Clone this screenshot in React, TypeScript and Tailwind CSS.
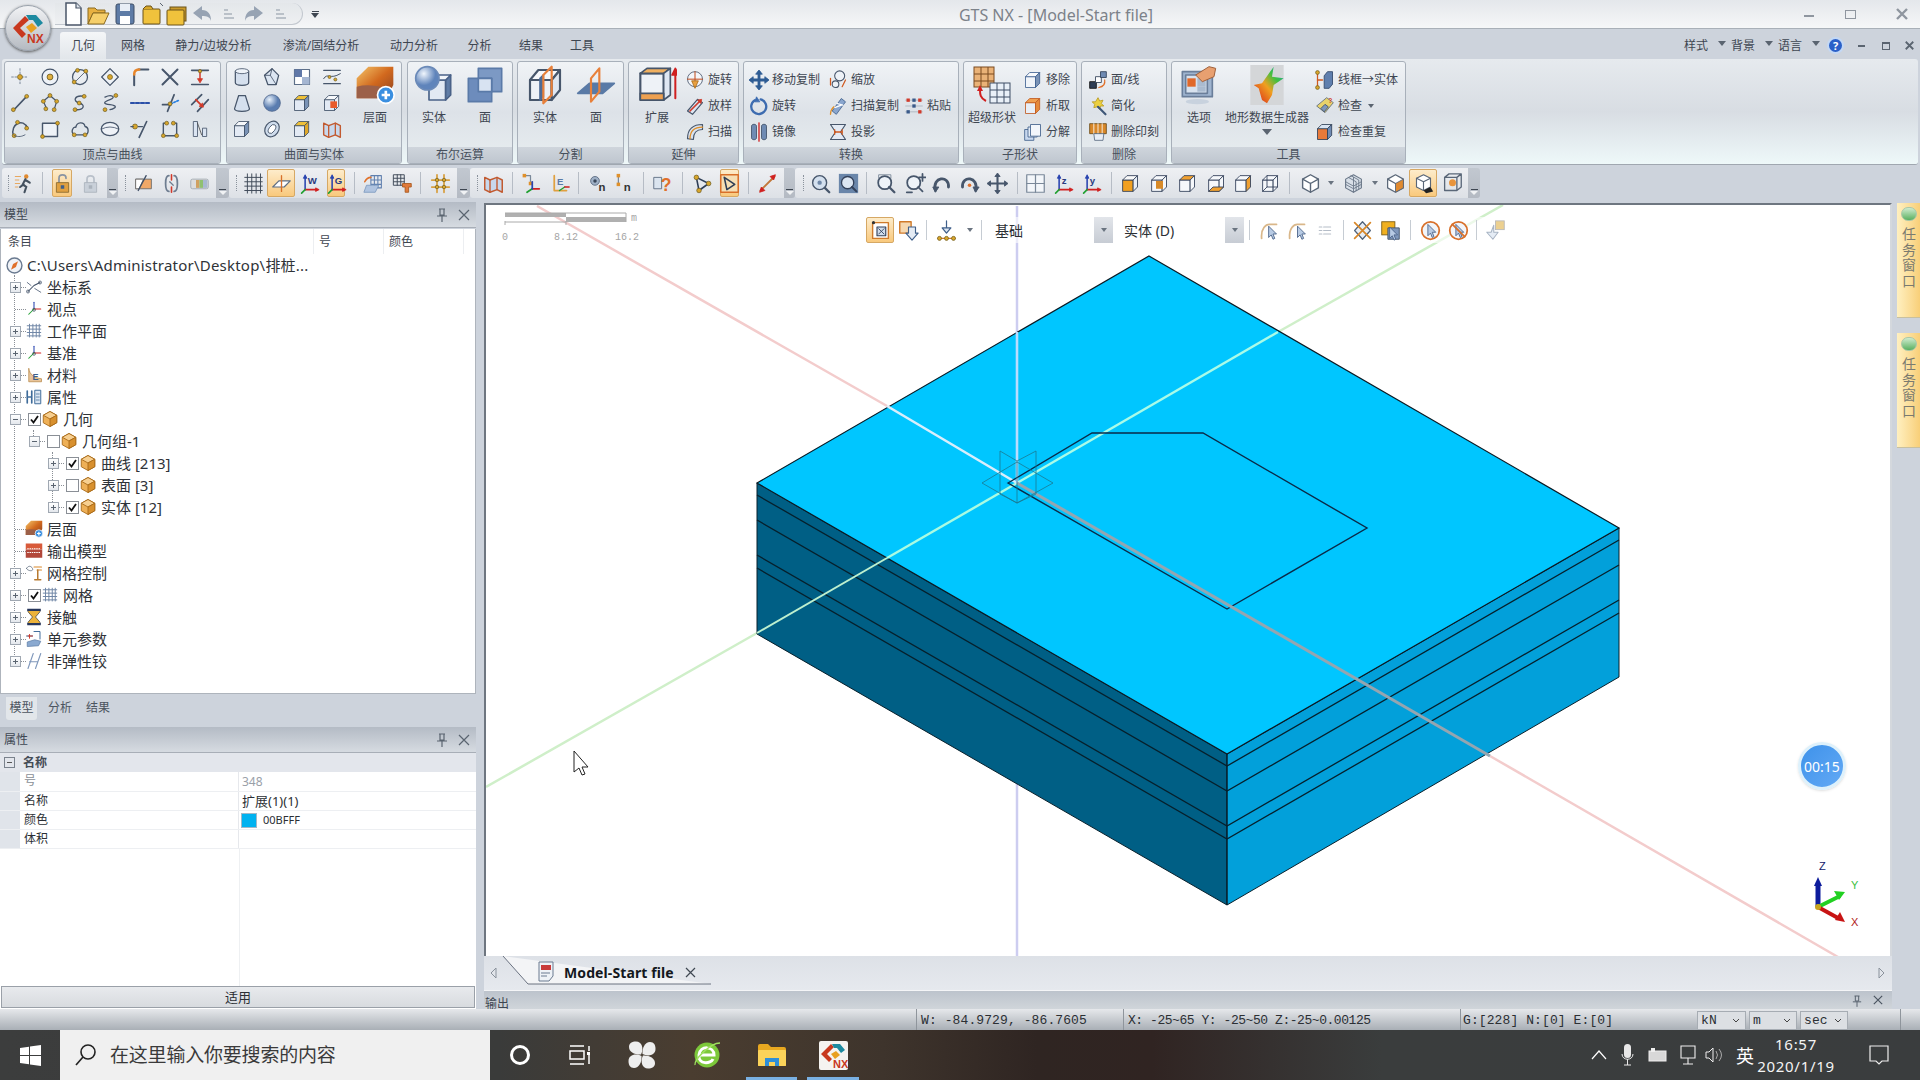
import React from 'react';

const s = '#47566b';
const L = (d: string, c: string = s, w: number = 1.5, dash?: string) => (
  <path d={d} fill="none" stroke={c} strokeWidth={w} strokeLinejoin="round" strokeLinecap="round" strokeDasharray={dash} />
);
const F = (d: string, f: string, c: string = '#3f4f66', w: number = 1) => <path d={d} fill={f} stroke={c} strokeWidth={w} strokeLinejoin="round" />;
const N = (x: number, y: number, r: number = 2.3) => <circle cx={x} cy={y} r={r} fill="#d8a62c" stroke="#6b5a20" strokeWidth={0.8} />;
const Cube = (f = '#e3eaf4', t = '#f6f8fb', r = '#7a93b6', c = '#3f4f66') => (
  <>
    {F('M3 8h12v13H3z', f, c)}
    {F('M3 8l5-5h12l-5 5z', t, c)}
    {F('M15 8l5-5v13l-5 5z', r, c)}
  </>
);
const Tri = (lab?: string) => (
  <>
    {L('M7 19V4', '#2a45b0', 1.8)}
    {F('M7 2l-2 4h4z', '#2a45b0', '#2a45b0')}
    {L('M7 19h13', '#d02020', 1.8)}
    {F('M23 19l-4-2v4z', '#d02020', '#d02020')}
    {L('M7 19l-4 4', '#20a030', 1.8)}
    {lab ? <text x="10" y="13" fontSize="11" fontWeight="700" fill="#2a3a80" fontFamily="Liberation Sans">{lab}</text> : null}
  </>
);
const Cursor = (x = 9, y = 6) => <path d={`M${x} ${y}v13l3-3 2 5 2-1-2-5h4z`} fill="#b8cbe4" stroke="#4a6288" strokeWidth={1} />;

const ICONS: Record<string, React.ReactNode> = {
  pt: <>{L('M12 2v20M2 12h20', '#7b8899', 1.2, '2 2')}{N(12, 12, 3)}</>,
  cir: <><circle cx="12" cy="12" r="9.5" fill="#eef2f7" stroke={s} strokeWidth="1.4" /><circle cx="12" cy="12" r="3.5" fill="#e0b040" stroke="#6b5a20" /></>,
  c3: <><circle cx="12" cy="12" r="9" fill="none" stroke={s} strokeWidth="1.5" />{L('M5 19L19 5', s, 1)}{N(5, 18)}{N(19, 5)}{N(9, 4)}</>,
  dia: <>{F('M12 2l10 10-10 10L2 12z', '#eef2f7', s, 1.5)}{N(12, 12, 3)}</>,
  fil: <>{L('M5 22V9', s, 2.4)}{L('M10 3h12', s, 2.4)}{L('M5 9q0-6 6-6', '#e8862a', 3)}</>,
  xx: <>{L('M3 3l18 18M21 3L3 21', s, 2.4)}</>,
  trim: <>{L('M2 4h20M2 21h20', s, 2)}{L('M12 4v11', '#d23a2a', 1.8)}{F('M12 19l-3-5h6z', '#d23a2a', '#d23a2a')}{N(12, 5, 2)}</>,
  lin: <>{L('M4 21L20 4', s, 2)}{N(4, 20)}{N(20, 4)}</>,
  pol: <>{L('M12 3l8 7-3 10M12 3L4 10l4 9', s, 1.5)}{N(12, 3)}{N(20, 10)}{N(4, 10)}{N(7, 19)}{N(17, 20)}</>,
  sc: <>{L('M17 4C5 2 3 10 11 12s6 9-5 8', s, 1.6)}{N(17, 4)}{N(6, 20)}{N(11, 12)}</>,
  hel: <>{L('M6 5c8-4 14 0 6 3s-9 5 0 6 8 4 0 6', s, 1.6)}{N(19, 3)}{N(6, 20)}</>,
  das: <>{L('M1 12h22', '#2a4fa8', 2.2, '4 2')}</>,
  cro: <>{L('M3 14h10M9 22l8-20', s, 2)}{L('M13 13l9-4', '#2a80e0', 2, '2 2')}{N(12, 13)}</>,
  isc: <>{L('M2 14L14 2M9 22L22 8', s, 2)}{L('M7 8l8 8', '#d23a2a', 2.2)}{F('M16 17l-5-1 4-4z', '#d23a2a', '#d23a2a')}</>,
  arc: <>{L('M4 20C0 6 16-2 21 11', s, 1.8)}{N(5, 20)}{N(20, 11)}{N(9, 4)}{L('M5 20c6 2 9 1 13-1', s, 1)}</>,
  rect: <>{F('M3 5h18v16H3z', '#eef2f7', s, 1.7)}{N(3, 21)}{N(21, 5)}</>,
  cld: <>{L('M5 19C0 15 4 9 7 10c1-7 10-7 11-1 5 1 5 9 0 10z', s, 1.6)}{N(5, 19)}{N(18, 19)}</>,
  ell: <><ellipse cx="12" cy="12" rx="10.5" ry="8" fill="#eef2f7" stroke={s} strokeWidth="1.6" />{L('M2 12q10-5 20 0', s, 1)}</>,
  nl: <>{N(6, 9, 3)}{L('M1 9h3M10 9h5', s, 1.5)}{L('M20 3L11 22', s, 2)}</>,
  brk: <>{L('M8 5H4v15h16V5h-4', s, 1.7)}{N(8, 5)}{N(16, 5)}{N(4, 20)}{N(20, 20)}</>,
  bars: <>{F('M4 3h5v18H4z', '#dbe5f2', s)}{F('M15 11h5v10h-5z', '#dbe5f2', s)}{L('M9 5l5 14', '#4a4a4a', 1)}</>,
  cyl: <>{F('M4 5v14c0 4 16 4 16 0V5z', '#d5e0ee', s, 1.5)}<ellipse cx="12" cy="5" rx="8" ry="3" fill="#eef3f9" stroke={s} /></>,
  pol3: <>{F('M12 2l8 8-3 11-10 0-4-11z', '#dce6f2', s, 1.5)}{L('M12 2l-2 8 7 11M4 10h6', s, 1)}</>,
  chk: <>{F('M3 3h18v18H3z', '#fff', '#5d6f88', 1.4)}<rect x="3" y="3" width="9" height="9" fill="#6078a8" /><rect x="12" y="12" width="9" height="9" fill="#a5b6d2" /></>,
  wav: <>{L('M2 4h20', s, 1.5)}{L('M2 20h20', s, 1.5)}{L('M2 14c5-8 7 2 20-6', s, 1.2)}{N(9, 12, 1.8)}{N(16, 15, 1.8)}</>,
  con: <>{F('M8 3h8l5 16c0 4-18 4-18 0z', '#d5e0ee', s, 1.5)}</>,
  sph: <><defs><radialGradient id="sg" cx="35%" cy="30%"><stop offset="0" stopColor="#e8f1fb" /><stop offset="1" stopColor="#5a7db0" /></radialGradient></defs><circle cx="12" cy="12" r="10" fill="url(#sg)" stroke="#50688e" /></>,
  cg: <>{Cube('#e3eaf4', '#eec038', '#7a93b6')}</>,
  cs: <>{Cube('#e3eaf4', '#f6f8fb', '#e9eef6')}<rect x="10" y="10" width="8" height="8" fill="#e85a2a" /></>,
  map: <>{F('M2 5l6 3 8-3 6 3v14l-6-3-8 3-6-3z', '#c8d8ec', '#c25a30', 1.7)}{L('M8 8v14M16 5v14', '#c25a30', 1.6)}</>,
  cub: <>{Cube()}</>,
  tor: <><ellipse cx="12" cy="12" rx="8" ry="10" transform="rotate(35 12 12)" fill="#cfdcec" stroke={s} strokeWidth="1.4" /><ellipse cx="12" cy="12" rx="3.5" ry="6" transform="rotate(35 12 12)" fill="#fff" stroke={s} /></>,
  cga: <>{Cube('#e3eaf4', '#eec038', '#e0a828')}</>,
  layer: <><defs><linearGradient id="lg" x1="0" y1="0" x2="1" y2="1"><stop offset="0" stopColor="#f4c56a" /><stop offset="0.5" stopColor="#d2691e" /><stop offset="1" stopColor="#8a4020" /></linearGradient></defs><path d="M1 8L8 1h15v11l-4 8H1z" fill="url(#lg)" /><path d="M1 13q8-2 18 1v6H1z" fill="#9c6048" /><circle cx="18.5" cy="18" r="5" fill="#3a8fe0" stroke="#fff" /><path d="M18.5 15.5v5M16 18h5" stroke="#fff" strokeWidth="1.6" /></>,
  boolS: <>{F('M9 9h10v12H9z', '#e2e9f3', '#4a6288')}{F('M19 9l3-3v12l-3 3z', '#5f7ca6', '#4a6288')}{F('M9 9l3-3h10l-3 3z', '#f2f5f9', '#4a6288')}<defs><radialGradient id="bs" cx="35%" cy="30%"><stop offset="0" stopColor="#f0f6fd" /><stop offset="1" stopColor="#5f84bb" /></radialGradient></defs><circle cx="8" cy="8" r="7" fill="url(#bs)" stroke="#6b8ab8" /></>,
  boolF: <>{F('M8 2h14v14H8z', '#7c99c4', '#5a7aa8')}{F('M2 8h14v14H2z', '#6d8cbc', '#5a7aa8')}{F('M8 8h8v8H8z', '#d8e3f2', '#5a7aa8')}</>,
  splS: <>{F('M3 9h13v12H3z', '#eef2f7', s, 1.3)}{F('M3 9l5-6h13l-5 6z', '#f6f8fb', s, 1.3)}{F('M16 9l5-6v12l-5 6z', '#dfe7f2', s, 1.3)}{F('M9 8l2-2v13l-2 2z', '#4f6c96', '#4f6c96')}{L('M11 23V6l5-5v17z', '#e8803a', 1.3)}</>,
  splF: <>{F('M1 17l7-6h15l-7 6z', '#5a7aa6', '#5a7aa6')}{L('M9 22V8l5-6v14z', '#e8803a', 1.3)}</>,
  ext: <>{F('M2 5h14v16H2z', '#eef2f7', s, 1.3)}{F('M2 5l4-3h14l-4 3z', '#f0b060', s, 1)}{F('M16 5l4-3v16l-4 3z', '#dfe7f2', s, 1)}{F('M2 17h14v4H2z', '#eda050', s, 1)}{L('M23 20V5', '#d02020', 1.2)}{F('M23 2l-2 4h4z', '#d02020', '#d02020')}</>,
  rot: <><circle cx="12" cy="11" r="9" fill="#f3f6fa" stroke={s} />{L('M3 11h18M12 2v18', '#c24a1a', 1.2)}{F('M8 13l4 9 4-9z', '#e8a040', '#a86a18')}</>,
  lof: <>{F('M3 18L15 4l6 4L9 22z', '#dce6f2', s, 1.4)}{L('M6 18L18 6', '#d03a2a', 2)}{F('M20 4l-5 1 4 4z', '#d03a2a', '#d03a2a')}</>,
  swp: <>{F('M3 20C3 8 10 3 21 3v6c-7 0-11 4-11 12z', '#d8e2ef', s, 1.4)}{L('M6 20C6 10 12 6 21 6', '#e0902a', 1.5)}</>,
  mov: <>{L('M12 3v18M3 12h18', '#2e5c94', 3.4)}{F('M12 0l-4 5h8zM12 24l-4-5h8zM0 12l5-4v8zM24 12l-5-4v8z', '#2e5c94', '#2e5c94')}</>,
  rt2: <>{L('M7 5a9 9 0 1 0 7-1', '#3d6cb0', 2.8)}{F('M9 1l-2 6 6 0z', '#3d6cb0', '#3d6cb0')}</>,
  mir: <>{F('M3 5c0-3 6-3 6 0v14c0 3-6 3-6 0z', '#6f8bb3', '#3f4f66')}{F('M15 5c0-3 6-3 6 0v14c0 3-6 3-6 0z', '#6f8bb3', '#3f4f66')}{L('M12 1v22', '#d02020', 1.6)}</>,
  scl: <><circle cx="14" cy="7" r="6" fill="#eef2f7" stroke={s} strokeWidth="1.3" /><circle cx="9" cy="17" r="4" fill="#eef2f7" stroke={s} strokeWidth="1.3" />{L('M3 10v8M21 12l-4 8', '#d05a20', 1.5)}</>,
  scp: <>{F('M5 18L16 3l5 4-11 15z', '#8aa6ce', '#3f5f8a')}{L('M8 14l8-3M11 9l7 2', '#fff', 1.4)}{L('M3 22c0-4 2-7 4-9', '#e0902a', 1.6)}</>,
  pst: <>{L('M2 5h20M2 12h20M2 19h20', '#aab2bc', 1)}<rect x="3" y="3" width="4" height="4" fill="#d23a2a" /><rect x="17" y="3" width="4" height="4" fill="#d23a2a" /><rect x="10" y="10" width="4" height="4" fill="#3a5a8a" /><rect x="3" y="17" width="4" height="4" fill="#3a5a8a" /><rect x="17" y="17" width="4" height="4" fill="#d23a2a" /><rect x="10" y="3" width="4" height="4" fill="#3a5a8a" /></>,
  prj: <>{F('M3 3h18l-6 9 6 9H3l6-9z', '#e3eaf4', s, 1.4)}{L('M8 12h9', '#d05a20', 1.8)}{L('M8 9v6M17 9v6', '#d05a20', 1.4)}</>,
  rm: <>{Cube('#f0f4f9', '#f8fafc', '#7a93b6', '#3f6090')}</>,
  ex2: <>{Cube('#e8eef6', '#f0a050', '#e58a3a', '#c05a20')}</>,
  dec: <>{F('M2 9h11v13H2z', '#c8d8ee', '#3f5f8a')}{F('M6 6h11v12H6z', '#e3ecf7', '#3f5f8a')}{F('M9 3h12v14H9z', '#f2f6fb', '#3f5f8a')}</>,
  fl: <>{F('M2 14h8v8H2z', '#2e3e56', '#111')}{F('M9 8h7v7H9z', '#fff', '#2e3e56')}{F('M15 2h7v7h-7z', '#6f8bb3', '#2e3e56')}{L('M20 12c1 5-2 8-7 9', '#e0702a', 1.5)}</>,
  wnd: <><path d="M12 2l2 4 4-1-2 4 3 3-4 0-1 4-3-3-4 1 1-4-3-3 4 0z" fill="#ecd040" stroke="#b89a20" />{L('M12 13l9 9', '#405878', 2.6)}</>,
  dlp: <>{F('M2 2h20v12H2z', '#d8882a', '#6a4a18')}{L('M7 2v12M12 2v12M17 2v12', '#fff', 1)}{F('M7 14h12l-1 8H8z', '#e8eef6', '#5a6a80')}</>,
  opt: <>{F('M2 4h18v15H2z', '#9fb4cf', '#6a7e9a')}{F('M4 6h13v11H4z', '#d8e2ee', '#6a7e9a')}<rect x="5" y="8" width="5" height="5" fill="#e0682a" /><rect x="11" y="8" width="5" height="5" fill="#aabbd0" /><rect x="11" y="13" width="5" height="3" fill="#aabbd0" /><ellipse cx="11" cy="22" rx="7" ry="1.6" fill="#c8d2de" /><path d="M10 6l8-5 4 1-1 5-7 3z" fill="#e8a070" stroke="#a0603a" strokeWidth=".6" /></>,
  ter: <><defs><linearGradient id="tg" x1="0" y1="1" x2="1" y2="0"><stop offset="0" stopColor="#d61a1a" /><stop offset="0.45" stopColor="#f0a020" /><stop offset="0.7" stopColor="#40c040" /><stop offset="1" stopColor="#20a0c0" /></linearGradient></defs><rect x="2" y="0" width="20" height="24" fill="#d4d6d8" /><path d="M4 12l5-1 7-10-1 6 7 1-6 4-1 6-3 5-3-2-2-7z" fill="url(#tg)" /></>,
  wr: <>{L('M3 2v20', '#d05a20', 1.5)}{N(3, 3)}{N(3, 21)}{L('M3 12h6', '#d05a20', 1.6)}{F('M11 7l4-5h6v15l-4 5h-6z', '#5f7fae', '#2e4468')}</>,
  ck: <>{F('M2 12L14 2l8 6-10 12z', '#e8d26a', '#5a6a80')}{F('M7 15l5-5 4 3-5 6z', '#7f97bb', '#3f4f66')}<text x="16" y="8" fontSize="8" fontWeight="700" fill="#d23a2a" fontFamily="Liberation Sans">?</text></>,
  ckr: <>{Cube('#e87a3a', '#d8e4f2', '#6f8bb3', '#2e3e56')}</>,
  run: <><path d="M1 4h7M1 8h5M1 12h6M1 16h4" stroke="#e8a860" strokeWidth="1.4" /><circle cx="14" cy="4" r="2.5" fill="#e08a30" /><path d="M13 7l-3 6 4 3-2 6M13 8l5 3M11 13l-4 3" stroke="#44515f" strokeWidth="2.4" fill="none" strokeLinecap="round" /></>,
  lock: <>{L('M8 11V6c0-5 8-5 8 0', '#8a94a2', 2)}{F('M5 11h14v11H5z', '#e0a040', '#8a6a30')}<rect x="10" y="14" width="4" height="4" fill="#3f5f8a" /></>,
  lock2: <>{L('M8 11V7c0-5 8-5 8 0v4', '#b9c0ca', 2)}{F('M5 11h14v11H5z', '#c9d0d9', '#aab2bc')}<rect x="10" y="14" width="4" height="4" fill="#aab2bc" /></>,
  sh: <>{F('M3 7h18v11H3z', '#f0a868', '#6a6a6a')}{F('M3 7h9l-5 11H3z', '#fff', '#6a6a6a')}{L('M6 20L15 3', '#3f4f66', 1.5)}</>,
  lnk: <>{L('M9 3C4 3 4 21 9 21M15 3c5 0 5 18 0 18', '#6e7d90', 2)}{L('M12 2v6M12 16v6', '#d23a2a', 1.8)}{L('M10 10l4 4', '#6e7d90', 1.4)}</>,
  cb: <><rect x="2" y="7" width="20" height="11" rx="2" fill="#ddd" stroke="#a0a8b0" /><rect x="8" y="8" width="4" height="9" fill="#d0a060" /><rect x="12" y="8" width="4" height="9" fill="#90c070" /><rect x="16" y="8" width="5" height="9" fill="#a8b8d0" /></>,
  grd: <>{L('M2 5h20M2 10h20M2 15h20M2 20h20M5 1v22M10 1v22M15 1v22M20 1v22', '#3f4a58', 1.1)}</>,
  pln: <>{F('M2 16l7-7h13l-7 7z', '#fff', '#5f6f84', 1.4)}{L('M12 3v18', '#d8702a', 1.5)}</>,
  tw: <>{Tri('W')}</>,
  tg: <>{Tri('G')}</>,
  tz: <>{Tri('z')}</>,
  ty: <>{Tri('y')}</>,
  ga: <>{L('M9 3h12v14H9zM13 3v14M17 3v14M9 8h12M9 13h12', '#5f7fae', 1.2)}{L('M2 10c2-4 4-5 7-5', '#e0702a', 1.8)}{F('M4 14h14l-4 8H1z', '#b0c4e0', '#7f9bc0')}</>,
  gk: <>{L('M2 2h12v12H2zM6 2v12M10 2v12M2 6h12M2 10h12', '#3f4a58', 1.1)}{F('M12 12h10v4h-3v6h-4v-6h-3z', '#e07a3a', '#a85a20')}</>,
  hsh: <>{L('M8 2v20M16 2v20M2 8h20M2 16h20', '#d8a040', 2)}{N(8, 8, 2)}{N(16, 8, 2)}{N(8, 16, 2)}{N(16, 16, 2)}</>,
  n1: <>{L('M5 3h7v8', '#7a8899', 1.4)}<rect x="3" y="1" width="4" height="4" fill="#e0902a" /><rect x="10" y="10" width="4" height="4" fill="#e0902a" />{L('M14 18h8', '#d02020', 2)}{L('M14 18l-6 4', '#20a030', 2)}{L('M14 18V10', '#2a45b0', 2)}</>,
  n2: <>{L('M6 3v17h14', '#e0a040', 2)}<text x="9" y="14" fontSize="11" fontWeight="700" fill="#5a7aa6" fontFamily="Liberation Sans">E</text>{L('M12 20l6-4', '#20a030', 1.6)}{L('M18 16h5', '#d02020', 1.6)}</>,
  nd: <><circle cx="8" cy="9" r="5" fill="#9fb0c6" stroke="#5a6a80" /><circle cx="8" cy="9" r="2" fill="#39465a" /><text x="12" y="21" fontSize="13" fontWeight="700" fill="#333" fontFamily="Liberation Sans">n</text></>,
  nd2: <>{L('M5 3v10', '#7a8899', 1.4)}<rect x="3" y="1" width="4" height="4" fill="#e0902a" /><rect x="3" y="11" width="4" height="4" fill="#e0902a" /><text x="11" y="21" fontSize="13" fontWeight="700" fill="#333" fontFamily="Liberation Sans">n</text></>,
  q: <>{F('M2 5h9v13H2z', '#dbe4ef', '#5a6a80')}<text x="10" y="20" fontSize="20" fontWeight="700" fill="#e0702a" fontFamily="Liberation Sans">?</text></>,
  tri: <>{L('M5 5L19 12 8 20z', '#2e3e56', 1.8)}{N(5, 5, 2.6)}{N(19, 12, 2.6)}{N(8, 20, 2.6)}</>,
  triO: <>{F('M2 2h20v20H2z', '#f6dfb4', '#d8702a', 1.8)}{L('M6 5l12 8-9 6z', '#2e3e56', 1.8)}</>,
  dim: <>{L('M4 20L20 4', '#c2783a', 2.2)}{F('M21 2l-6 2 4 4zM3 22l6-2-4-4z', '#d02020', '#d02020')}</>,
  zm: <><circle cx="11" cy="11" r="8" fill="#d4e0ee" stroke="#47566b" strokeWidth="1.6" /><circle cx="11" cy="11" r="2.5" fill="#7088a8" />{L('M17 17l5 5', '#47566b', 2.6)}</>,
  zmb: <><rect x="1" y="1" width="22" height="22" fill="#6a86aa" /><circle cx="11" cy="11" r="7" fill="#dce6f2" stroke="#33415a" strokeWidth="1.5" />{L('M16 16l5 5', '#33415a', 2.4)}</>,
  zw: <>{L('M3 6V2h14v4', '#7a8899', 1)}<circle cx="10" cy="11" r="7.5" fill="#eef3f9" stroke="#47566b" strokeWidth="2" />{L('M15 16l6 6', '#47566b', 2.6)}</>,
  zd: <><circle cx="10" cy="11" r="7.5" fill="#eef3f9" stroke="#47566b" strokeWidth="2" />{L('M15 16l5 5M20 1v8M16 5h8', '#47566b', 2)}{L('M2 22h6', '#47566b', 2)}</>,
  rl: <>{L('M5 20C1 4 21 2 20 16', '#47566b', 3.2)}{F('M5 22l-3-6h7z', '#47566b', '#47566b')}</>,
  rr: <>{L('M19 20C23 4 3 2 4 16', '#47566b', 3.2)}{F('M19 22l-3-6h7z', '#47566b', '#47566b')}<circle cx="12" cy="14" r="2" fill="#e0702a" /></>,
  pan: <>{L('M12 3v18M3 12h18', '#47566b', 2.4)}{F('M12 0l-3 4h6zM12 24l-3-4h6zM0 12l4-3v6zM24 12l-4-3v6z', '#47566b', '#47566b')}</>,
  win: <>{F('M2 2h20v20H2z', '#f3f6fa', '#7a8899', 1.4)}{L('M12 2v20M2 12h20', '#7a8899', 1.4)}</>,
  cA: <>{Cube('#f2a020', '#f8f8f8', '#e8eef6', '#33415a')}</>,
  cB: <>{Cube('#f6f8fb', '#f6f8fb', '#f6f8fb', '#33415a')}<rect x="8" y="9" width="8" height="9" fill="#d88a28" /></>,
  cC: <>{Cube('#f6f8fb', '#f0a030', '#f6f8fb', '#33415a')}</>,
  cD: <>{Cube('#f6f8fb', '#f6f8fb', '#f6f8fb', '#33415a')}<path d="M3 21l5-5h12l-5 5z" fill="#f0a030" stroke="#33415a" /></>,
  cE: <>{Cube('#f6f8fb', '#f6f8fb', '#f0a030', '#33415a')}</>,
  cF: <>{Cube('#f6f8fb', '#f6f8fb', '#f6f8fb', '#33415a')}{L('M8 3v13h12M8 16l-5 5', '#33415a', 1)}</>,
  iso: <>{F('M12 2l9 5v10l-9 5-9-5V7z', '#fff', '#5a6778', 1.6)}{L('M3 7l9 5 9-5M12 12v10', '#5a6778', 1.6)}</>,
  wire: <>{F('M12 2l9 5v10l-9 5-9-5V7z', '#d8dfe8', '#6a7788', 1.3)}{L('M6 5l9 5v10M9 3l9 5v10M3 10l9 5 9-5M3 13l9 5 9-5M12 5v17', '#6a7788', 1)}</>,
  orng: <>{F('M12 2l9 5v10l-9 5-9-5V7z', '#fff', '#5a6778', 1.4)}{F('M12 12l9-5v10l-9 5z', '#e08a30', '#5a6778')}{L('M3 7l9 5', '#5a6778', 1.4)}</>,
  shd: <>{F('M12 2l8 4v10l-8 4-8-4V6z', '#fff', '#5a6778', 1.3)}{L('M4 6l8 4 8-4M12 10v10', '#5a6778', 1.3)}<path d="M12 20l8-4 3 5-8 2z" fill="#222" /></>,
  wf: <>{L('M3 5h14v15H3zM3 5l5-4h14v15l-5 4M17 5l5-4', '#5a6778', 1.5)}<circle cx="12" cy="11" r="4" fill="#e8943c" /></>,
  v1: <>{F('M3 3h18v18H3z', '#fff', '#d07a2a', 1.6)}{F('M8 8h10v10H8z', '#cfdcec', '#33415a', 1.3)}{L('M10 10l6 6M16 10l-6 6', '#33415a', 1)}<circle cx="4" cy="3" r="1.8" fill="#333" /></>,
  v2: <>{F('M2 2h13v13H2z', '#f6d8b0', '#d07a2a', 1.6)}{F('M12 8h8v7h3l-7 8-7-8h3z', '#e5ecf5', '#3f5f8a', 1.3)}</>,
  v3: <>{F('M12 1v8h5l-5 6-5-6h5z', '#dbe5f2', '#3f5f8a', 1.4)}{L('M2 21h20', '#d07a2a', 1.5)}{N(4, 21)}{N(12, 21)}{N(20, 21)}</>,
  v4: <>{L('M3 21C2 9 8 5 12 5h8', '#d9b78a', 2)}{Cursor(11, 7)}</>,
  v5: <>{L('M3 21C2 9 8 5 12 5h8', '#d9b78a', 2)}{Cursor(12, 7)}</>,
  v6: <>{L('M6 8h3M6 12h3M6 16h3M11 8h8M11 12h8M11 16h8', '#b5bdc8', 1.3)}</>,
  v7: <>{F('M12 2l9 10-9 10L3 12z', '#e8eef6', '#50627a', 1.4)}{L('M3 3l18 18M21 3L3 21', '#d8882a', 2)}</>,
  v8: <><rect x="2" y="2" width="15" height="15" fill="#f0b020" stroke="#7a5a10" />{F('M9 9h13v13H9z', '#7f97bb', '#3f4f66')}{Cursor(11, 8)}</>,
  v9: <><circle cx="12" cy="12" r="10" fill="#f2f5f9" stroke="#d8702a" strokeWidth="2" />{Cursor(9, 5)}</>,
  v10: <><circle cx="12" cy="12" r="10" fill="#f2f5f9" stroke="#d8702a" strokeWidth="2" />{Cursor(9, 5)}{L('M5 5l14 14', '#d8702a', 2)}</>,
  v11: <><rect x="12" y="1" width="10" height="10" fill="#ecd090" stroke="#b8b8b8" />{F('M10 6v8h5l-6 8-7-8h5z', '#e5ecf5', '#a8b4c4', 1.2)}</>,
  ca: <>{L('M4 18L12 10 20 6', '#3f4f66', 1.4)}<circle cx="4" cy="18" r="2" fill="none" stroke="#3f4f66" /><circle cx="20" cy="6" r="2" fill="none" stroke="#3f4f66" />{L('M3 6l5 4M13 14l8 5', '#5a6a80', 1.2)}</>,
  tv: <>{L('M12 12V3', '#2a45b0', 1.4)}{L('M12 12h9', '#d02020', 1.4)}{L('M12 12l-7 7', '#20a030', 1.4)}<circle cx="12" cy="13" r="2" fill="none" stroke="#3f4f66" /></>,
  gr2: <>{L('M3 5h18M3 9.5h18M3 14h18M3 18.5h18M6 3v17M10.5 3v17M15 3v17M19 3v17', '#6f86a6', 1.3)}</>,
  mat: <>{F('M5 21V3c1 9 8 13 17 14v4z', '#e8c49a', '#b8894a')}<text x="10" y="18" fontSize="12" fontWeight="700" fill="#3f5f8a" fontFamily="Liberation Sans">E</text></>,
  att: <>{L('M3 4v16M9 4v16M3 12h6', '#3f6c9a', 2.2)}{F('M13 3h8v18h-8z', '#dbe6f2', '#3f6c9a', 1.3)}{L('M15 8h4M15 12h4M15 16h4', '#3f6c9a', 1)}</>,
  box: <>{F('M12 2l9 5v10l-9 5-9-5V7z', '#eeb057', '#a86a18', 1.2)}{F('M3 7l9-5 9 5-9 5z', '#f7cf90', '#a86a18', 1.2)}{F('M12 12l9-5v10l-9 5z', '#d8902e', '#a86a18', 1.2)}</>,
  out: <><rect x="1" y="2" width="22" height="8" fill="#d85a3a" /><rect x="1" y="10" width="22" height="11" fill="#b2483a" /><path d="M3 9h18M3 14h18" stroke="#fff" strokeWidth="1.4" strokeDasharray="2 1" /></>,
  mc: <>{L('M2 6c2-4 6-4 8 0s-6 4-8 0', '#6a7788', 1.2)}{L('M12 4h10M16 8h6', '#d8882a', 1.4)}{L('M17 8v13M13 21h8', '#b87a30', 2)}</>,
  hg: <>{F('M4 2h16v3l-6 7 6 7v3H4v-3l6-7-6-7z', '#ecb23a', '#444')}<rect x="3" y="1" width="18" height="3" fill="#26365c" /><rect x="3" y="20" width="18" height="3" fill="#26365c" /></>,
  ep: <>{F('M3 22V16l10-3 8 2-3 6z', '#8aa9d0', '#5f7fa8')}{L('M12 2h8v10M2 8h8', '#3f6c9a', 1.3)}{L('M6 6v5M10 8H4', '#d23a2a', 1.3)}</>,
  hi: <>{L('M4 22L11 2M14 22L21 2M6 13h11', '#7f97bb', 1.5)}</>,
};

const Ic = ({ n, z = 20 }: { n: string; z?: number }) => (
  <svg width={z} height={z} viewBox="0 0 24 24" className="shrink-0">{ICONS[n]}</svg>
);

const Group = ({ label, w, children }: { label: string; w: string; children?: React.ReactNode }) => (
  <div className={`${w} h-[103px] shrink-0 flex flex-col rounded-[3px] border border-[#a8b0ba] overflow-hidden bg-gradient-to-b from-[#f0f3f6] via-[#dde2e8] to-[#e8eef0]`}>
    <div className="flex-1 flex min-h-0">{children}</div>
    <div className="h-[16px] shrink-0 bg-gradient-to-b from-[#cfd5dc] to-[#bfc6cf] text-center text-[12px] leading-[16px] text-[#47505c]">{label}</div>
  </div>
);

const Big = ({ n, t, w, z = 40 }: { n: string; t: string; w: string; z?: number }) => (
  <div className={`${w} shrink-0 flex flex-col items-center pt-[3px]`}>
    <Ic n={n} z={z} />
    <div className="mt-[5px] text-[12px] leading-[16px] text-[#3e4651] whitespace-nowrap">{t}</div>
  </div>
);

const Sm = ({ n, t, arrow }: { n: string; t: string; arrow?: boolean }) => (
  <div className="h-[26px] flex items-center gap-[3px] text-[12px] text-[#3e4651] whitespace-nowrap">
    <Ic n={n} />
    <span>{t}</span>
    {arrow ? <span className="ml-[3px] w-0 h-0 border-x-[3px] border-x-transparent border-t-[4px] border-t-[#5a6470]" /> : null}
  </div>
);

const grid1 = ['pt', 'cir', 'c3', 'dia', 'fil', 'xx', 'trim', 'lin', 'pol', 'sc', 'hel', 'das', 'cro', 'isc', 'arc', 'rect', 'cld', 'ell', 'nl', 'brk', 'bars'];
const grid2 = ['cyl', 'pol3', 'chk', 'wav', 'con', 'sph', 'cg', 'cs', 'cub', 'tor', 'cga', 'map'];

const Ribbon = () => (
  <div className="h-[106px] shrink-0 mx-[2px] rounded-[3px] border-b border-[#a0a7b0] bg-gradient-to-b from-[#e6eaee] via-[#d8dde3] to-[#eef8f9] pt-[2px] pl-[2px] flex gap-[4px]">
    <Group label="顶点与曲线" w="w-[217px] mr-[1px]">
      <div className="grid grid-cols-[repeat(7,30px)] auto-rows-[26px] pt-[2px]">
        {grid1.map((n) => (
          <div key={n} className="flex items-center justify-center"><Ic n={n} /></div>
        ))}
      </div>
    </Group>
    <Group label="曲面与实体" w="w-[176px] mr-[1px]">
      <div className="grid grid-cols-[repeat(4,30px)] auto-rows-[26px] pt-[2px]">
        {grid2.map((n) => (
          <div key={n} className="flex items-center justify-center"><Ic n={n} /></div>
        ))}
      </div>
      <Big n="layer" t="层面" w="w-[56px]" />
    </Group>
    <Group label="布尔运算" w="w-[106px]">
      <Big n="boolS" t="实体" w="w-[52px]" />
      <Big n="boolF" t="面" w="w-[50px]" />
    </Group>
    <Group label="分割" w="w-[107px]">
      <Big n="splS" t="实体" w="w-[54px]" />
      <Big n="splF" t="面" w="w-[48px]" />
    </Group>
    <Group label="延伸" w="w-[111px]">
      <Big n="ext" t="扩展" w="w-[56px]" />
      <div className="pt-[5px]">
        <Sm n="rot" t="旋转" />
        <Sm n="lof" t="放样" />
        <Sm n="swp" t="扫描" />
      </div>
    </Group>
    <Group label="转换" w="w-[216px]">
      <div className="pl-[5px] pt-[5px] w-[84px] shrink-0">
        <Sm n="mov" t="移动复制" />
        <Sm n="rt2" t="旋转" />
        <Sm n="mir" t="镜像" />
      </div>
      <div className="pt-[5px] w-[76px] shrink-0">
        <Sm n="scl" t="缩放" />
        <Sm n="scp" t="扫描复制" />
        <Sm n="prj" t="投影" />
      </div>
      <div className="pt-[31px]">
        <Sm n="pst" t="粘贴" />
      </div>
    </Group>
    <Group label="子形状" w="w-[114px]">
      <div className="w-[56px] shrink-0 flex flex-col items-center pt-[3px]">
        <svg width="40" height="40" viewBox="0 0 40 40" className="shrink-0">
          <rect x="2" y="2" width="20" height="20" fill="#eab277" stroke="#7a4a20" />
          <path d="M2 9h20M2 16h20M9 2v20M16 2v20" stroke="#7a4a20" />
          <rect x="18" y="18" width="20" height="20" fill="#e9f0f8" stroke="#3f4f66" />
          <path d="M18 25h20M18 32h20M25 18v20M32 18v20" stroke="#3f4f66" />
          <path d="M14 36c-6-3-6-7-6-11" fill="none" stroke="#d02020" strokeWidth="2" />
          <path d="M8 20l-3 6h6z" fill="#d02020" />
        </svg>
        <div className="mt-[5px] text-[12px] leading-[16px] text-[#3e4651] whitespace-nowrap">超级形状</div>
      </div>
      <div className="pl-[3px] pt-[5px]">
        <Sm n="rm" t="移除" />
        <Sm n="ex2" t="析取" />
        <Sm n="dec" t="分解" />
      </div>
    </Group>
    <Group label="删除" w="w-[86px]">
      <div className="pl-[6px] pt-[5px]">
        <Sm n="fl" t="面/线" />
        <Sm n="wnd" t="简化" />
        <Sm n="dlp" t="删除印刻" />
      </div>
    </Group>
    <Group label="工具" w="w-[235px]">
      <Big n="opt" t="选项" w="w-[54px]" />
      <div className="w-[82px] shrink-0 flex flex-col items-center pt-[3px]">
        <Ic n="ter" z={40} />
        <div className="mt-[5px] text-[12px] leading-[16px] text-[#3e4651] whitespace-nowrap">地形数据生成器</div>
        <div className="mt-[3px] w-0 h-0 border-x-[5px] border-x-transparent border-t-[6px] border-t-[#5a6470]" />
      </div>
      <div className="pl-[7px] pt-[5px]">
        <Sm n="wr" t="线框→实体" />
        <Sm n="ck" t="检查" arrow />
        <Sm n="ckr" t="检查重复" />
      </div>
    </Group>
  </div>
);

type Item = [number, string, boolean?];

const Seg = ({ start, end, items }: { start: number; end: number; items: Item[] }) => {
  const bounds: number[] = [start];
  items.forEach((it, i) => {
    if (i < items.length - 1) bounds.push((it[0] + items[i + 1][0]) / 2);
  });
  bounds.push(end);
  return (
    <div className="h-[30px] flex rounded-l-[3px] bg-gradient-to-b from-[#eef0f3] to-[#dde1e6]" style={{ width: end - start }}>
      {items.map((it, i) => {
        const leftW = it[0] - bounds[i];
        const rightW = bounds[i + 1] - it[0];
        const half = Math.min(leftW, rightW);
        const w = bounds[i + 1] - bounds[i];
        return (
          <div key={i} className="relative h-full shrink-0 flex items-center" style={{ width: w, paddingLeft: leftW - half }}>
            {it[1] === '|' ? (
              <div className="mx-auto w-[1px] h-[22px] bg-[#b6bcc5]" />
            ) : it[1] === ':' ? (
              <div className="mx-auto h-[16px] border-l border-dotted border-[#8a929c]" />
            ) : it[1] === 'v' ? (
              <div className="mx-auto w-0 h-0 border-x-[3px] border-x-transparent border-t-[4px] border-t-[#6a7480]" />
            ) : (
              <div className={`flex items-center justify-center h-[28px] rounded-[2px] ${it[2] ? 'border border-[#d6a864] bg-gradient-to-b from-[#fdeccb] to-[#f9c97c]' : ''}`} style={{ width: half * 2 }}>
                <Ic n={it[1]} z={21} />
              </div>
            )}
          </div>
        );
      })}
    </div>
  );
};

const Grip = ({ w }: { w: string }) => (
  <div className={`${w} h-[30px] shrink-0 flex flex-col items-center justify-end pb-[3px] rounded-r-[3px] bg-gradient-to-b from-[#c2c8d0] to-[#b4bac3]`}>
    <div className="w-[7px] h-[1px] bg-[#3e4651] mb-[1px]" />
    <div className="w-0 h-0 border-x-[4px] border-x-transparent border-t-[4px] border-t-[#f0f2f4]" />
  </div>
);

const Toolbar = () => (
  <div className="h-[35px] shrink-0 flex pt-[3px] pl-[2px]">
    <Seg start={2} end={107} items={[[7, ':'], [24, 'run'], [42, '|'], [62, 'lock', true], [90, 'lock2']]} />
    <Grip w="w-[11px]" />
    <Seg start={118} end={216} items={[[124, ':'], [143, 'sh'], [171, 'lnk'], [199, 'cb']]} />
    <Grip w="w-[13px]" />
    <Seg start={229} end={457} items={[[235, ':'], [253, 'grd'], [281, 'pln', true], [309, 'tw'], [336, 'tg', true], [354, '|'], [373, 'ga'], [402, 'gk'], [420, '|'], [440, 'hsh']]} />
    <Grip w="w-[13px]" />
    <Seg start={470} end={784} items={[[475, ':'], [493, 'map'], [512, '|'], [530, 'n1'], [559, 'n2'], [578, '|'], [598, 'nd'], [624, 'nd2'], [643, '|'], [662, 'q'], [682, '|'], [702, 'tri'], [729, 'triO', true], [748, '|'], [767, 'dim']]} />
    <Grip w="w-[11px]" />
    <Seg start={795} end={1468} items={[[802, ':'], [820, 'zm'], [848, 'zmb'], [866, '|'], [886, 'zw'], [915, 'zd'], [941, 'rl'], [969, 'rr'], [997, 'pan'], [1017, '|'], [1035, 'win'], [1063, 'tz'], [1091, 'ty'], [1111, '|'], [1130, 'cA'], [1159, 'cB'], [1187, 'cC'], [1216, 'cD'], [1243, 'cE'], [1270, 'cF'], [1289, '|'], [1310, 'iso'], [1331, 'v'], [1353, 'wire'], [1375, 'v'], [1395, 'orng'], [1423, 'shd', true], [1452, 'wf']]} />
    <Grip w="w-[12px]" />
  </div>
);

const Exp = ({ open }: { open?: boolean }) => (
  <div className="relative w-[11px] h-[11px] shrink-0 border border-[#a0a8b2] bg-gradient-to-b from-white to-[#e4e8ed]">
    <div className="absolute left-[2px] top-[4px] w-[5px] h-[1px] bg-[#5a6470]" />
    {open ? null : <div className="absolute left-[4px] top-[2px] w-[1px] h-[5px] bg-[#5a6470]" />}
  </div>
);

const Chk = ({ on }: { on?: boolean }) => (
  <div className="ml-[2px] w-[13px] h-[13px] shrink-0 border border-[#8a8f96] bg-white flex items-center justify-center">
    {on ? (
      <svg width="11" height="11" viewBox="0 0 11 11"><path d="M2 5.5l2.5 3L9 2" fill="none" stroke="#111" strokeWidth="1.8" /></svg>
    ) : null}
  </div>
);

type RowT = { l?: number; e?: 'p' | 'm' | 'n'; c?: boolean; ic: string; t: string };
const rows: RowT[] = [
  { e: 'p', ic: 'ca', t: '坐标系' },
  { e: 'n', ic: 'tv', t: '视点' },
  { e: 'p', ic: 'gr2', t: '工作平面' },
  { e: 'p', ic: 'tv', t: '基准' },
  { e: 'p', ic: 'mat', t: '材料' },
  { e: 'p', ic: 'att', t: '属性' },
  { e: 'm', c: true, ic: 'box', t: '几何' },
  { l: 1, e: 'm', c: false, ic: 'box', t: '几何组-1' },
  { l: 2, e: 'p', c: true, ic: 'box', t: '曲线 [213]' },
  { l: 2, e: 'p', c: false, ic: 'box', t: '表面 [3]' },
  { l: 2, e: 'p', c: true, ic: 'box', t: '实体 [12]' },
  { e: 'n', ic: 'layer', t: '层面' },
  { e: 'n', ic: 'out', t: '输出模型' },
  { e: 'p', ic: 'mc', t: '网格控制' },
  { e: 'p', c: true, ic: 'gr2', t: '网格' },
  { e: 'p', ic: 'hg', t: '接触' },
  { e: 'p', ic: 'ep', t: '单元参数' },
  { e: 'p', ic: 'hi', t: '非弹性铰' },
];
const indent = ['pl-[9px]', 'pl-[28px]', 'pl-[47px]'];

const TreeRow = ({ r }: { r: RowT }) => (
  <div className={`h-[22px] flex items-center ${indent[r.l || 0]} text-[15px] text-[#2f3338] whitespace-nowrap`}>
    {r.e === 'n' ? <div className="w-[5px] shrink-0" /> : <Exp open={r.e === 'm'} />}
    <div className={`h-0 border-t border-dotted border-[#8a8f96] shrink-0 ${r.e === 'n' ? 'w-[11px]' : 'w-[5px]'}`} />
    {r.c === undefined ? null : <Chk on={r.c} />}
    <div className={r.c === undefined ? '-mx-[1px]' : 'ml-[0px] -mr-[1px]'}><Ic n={r.ic} z={18} /></div>
    <span className="ml-[5px]">{r.t}</span>
  </div>
);

const PanelHead = ({ t }: { t: string }) => (
  <div className="h-[26px] shrink-0 flex items-center pl-[4px] pr-[6px] bg-gradient-to-b from-[#b4bbc5] to-[#d6dbe1] text-[12px] text-[#3e4651] border-b border-[#a8aeb7]">
    <span className="flex-1">{t}</span>
    <svg width="12" height="14" viewBox="0 0 12 14" className="mr-[10px]"><path d="M3 1h6M4 1v6h4V1M1 8h10M6 8v6" fill="none" stroke="#5a6470" strokeWidth="1.2" /></svg>
    <svg width="12" height="12" viewBox="0 0 12 12"><path d="M1 1l10 10M11 1L1 11" stroke="#5a6470" strokeWidth="1.2" /></svg>
  </div>
);

const PropRow = ({ k, muted, tall, children }: { k: string; muted?: boolean; tall?: boolean; children?: React.ReactNode }) => (
  <div className={`${tall ? 'h-[20px]' : 'h-[19px]'} flex border-b border-[#edeff2] text-[12px]`}>
    <div className="w-[20px] shrink-0 bg-[#e0e4ea]" />
    <div className={`w-[219px] shrink-0 pl-[4px] border-r border-[#e6e8ec] leading-[18px] ${muted ? 'text-[#8a8f96]' : 'text-[#2b2f34]'}`}>{k}</div>
    <div className={`flex-1 pl-[3px] leading-[18px] flex items-center ${muted ? 'text-[#9aa0a8]' : 'text-[#2b2f34]'}`}>{children}</div>
  </div>
);

const LeftPanel = () => (
  <div className="w-[476px] shrink-0 flex flex-col pt-[2px]">
    <PanelHead t="模型" />
    <div className="h-[465px] shrink-0 mt-[1px] bg-white border-x border-b border-[#aeb4bc] flex flex-col">
      <div className="h-[25px] shrink-0 flex text-[12px] text-[#3e4651] leading-[26px]">
        <div className="w-[313px] pl-[7px] border-r border-[#eceef1]">条目</div>
        <div className="w-[70px] pl-[5px] border-r border-[#eceef1]">号</div>
        <div className="w-[80px] pl-[5px] border-r border-[#eceef1]">颜色</div>
      </div>
      <div className="relative">
        <div className="absolute left-[13px] top-[21px] h-[386px] border-l border-dotted border-[#8a8f96]" />
        <div className="absolute left-[32px] top-[176px] h-[10px] border-l border-dotted border-[#8a8f96]" />
        <div className="absolute left-[51px] top-[198px] h-[54px] border-l border-dotted border-[#8a8f96]" />
        <div className="relative h-[22px] flex items-center pl-[5px] text-[15px] text-[#2f3338] whitespace-nowrap">
          <svg width="17" height="17" viewBox="0 0 24 24" className="shrink-0">
            <circle cx="12" cy="12" r="10.5" fill="#f0f3f7" stroke="#6a7a90" strokeWidth="2" />
            <path d="M17 6l-7 4-3 8 7-4z" fill="#e0702a" />
          </svg>
          <span className="ml-[4px] tracking-[0.22px]">C:\Users\Administrator\Desktop\排桩...</span>
        </div>
        <div className="relative">
          {rows.map((r) => (
            <TreeRow key={r.t} r={r} />
          ))}
        </div>
      </div>
    </div>
    <div className="h-[33px] shrink-0 flex items-start pl-[6px] pt-[3px] text-[12px] text-[#4c5560]">
      <div className="w-[31px] h-[23px] text-center leading-[22px] rounded-b-[3px] bg-[#e2e6ea]">模型</div>
      <div className="ml-[11px] leading-[22px]">分析</div>
      <div className="ml-[14px] leading-[22px]">结果</div>
    </div>
    <PanelHead t="属性" />
    <div className="flex-1 min-h-0 bg-white flex flex-col">
      <div className="h-[19px] shrink-0 flex items-center bg-[#e3e6ec] text-[12px] font-bold text-[#444b55]">
        <div className="ml-[4px] mr-[8px] w-[11px] h-[11px] border border-[#7a828c] flex items-center justify-center">
          <div className="w-[5px] h-[1px] bg-[#555]" />
        </div>
        名称
      </div>
      <PropRow k="号" muted tall>348</PropRow>
      <PropRow k="名称"><span className="text-[13px]">扩展(1)(1)</span></PropRow>
      <PropRow k="颜色">
        <span className="w-[16px] h-[15px] -ml-[1px] bg-[#00b2f0] border border-[#9fb8c8]" />
        <span className="ml-[6px] text-[11px]">00BFFF</span>
      </PropRow>
      <PropRow k="体积" />
      <div className="flex-1 ml-[239px] border-l border-[#eef0f2]" />
      <div className="h-[22px] shrink-0 mx-[1px] mb-[1px] border border-[#9aa0a8] bg-gradient-to-b from-[#e8eaed] to-[#d8dbdf] text-center text-[13px] leading-[20px] text-[#2b2f34]">适用</div>
    </div>
  </div>
);

const VBtn = ({ n, w, active, dim }: { n: string; w: string; active?: boolean; dim?: boolean }) => (
  <div className={`${w} h-[26px] shrink-0 flex items-center justify-center rounded-[2px] ${active ? 'border border-[#d6a864] bg-gradient-to-b from-[#fdeccb] to-[#f9c97c]' : ''} ${dim ? 'opacity-70' : ''}`}>
    <Ic n={n} z={21} />
  </div>
);
const VSep = ({ w }: { w: string }) => (
  <div className={`${w} shrink-0 flex justify-center`}><div className="w-[1px] h-[20px] bg-[#c6ccd3]" /></div>
);
const Drop = () => (
  <div className="w-[19px] h-[26px] shrink-0 flex items-center justify-center bg-gradient-to-b from-[#e2e5ea] to-[#c7ccd4]">
    <div className="w-0 h-0 border-x-[3px] border-x-transparent border-t-[4px] border-t-[#6a7480]" />
  </div>
);

const Scene = () => {
  const T = [1149, 256];
  const Lf = [757, 483];
  const Fr = [1227, 754];
  const R = [1619, 528];
  const off = [12, 37, 72, 85];
  return (
    <svg viewBox="486 205 1404 751" className="absolute inset-0 w-full h-full">
      <line x1="537" y1="206" x2="887" y2="406" stroke="#f3cccc" strokeWidth="2.5" />
      <line x1="1490" y1="756" x2="1838" y2="957" stroke="#f3cccc" strokeWidth="2.5" />
      <line x1="486" y1="787" x2="757" y2="633" stroke="#cfefc9" strokeWidth="2.5" />
      <line x1="1278" y1="332" x2="1503" y2="205" stroke="#cfefc9" strokeWidth="2.5" />
      <line x1="1017" y1="206" x2="1017" y2="332" stroke="#cdcdf0" strokeWidth="2.5" />
      <line x1="1017" y1="784" x2="1017" y2="957" stroke="#cdcdf0" strokeWidth="2.5" />
      <polygon points={`${Lf} ${Fr} 1227,905 757,634`} fill="#005f85" stroke="#08202c" strokeWidth="1" />
      <polygon points={`${Fr} ${R} 1619,677 1227,905`} fill="#02a0da" stroke="#08202c" strokeWidth="1" />
      <polygon points={`${T} ${R} ${Fr} ${Lf}`} fill="#00c6ff" stroke="#0a1a24" strokeWidth="1.2" />
      {off.map((o) => (
        <polyline key={o} points={`757,${483 + o} 1227,${754 + o} 1619,${528 + o}`} fill="none" stroke="#06202c" strokeWidth="1.3" />
      ))}
      <line x1="1227" y1="754" x2="1227" y2="905" stroke="#06202c" strokeWidth="1" />
      <line x1="887" y1="558" x2="757" y2="633" stroke="#bdf0cf" strokeWidth="2" />
      <line x1="1017" y1="483" x2="887" y2="558" stroke="#a9fbe2" strokeWidth="2.4" />
      <line x1="1017" y1="483" x2="1278" y2="332" stroke="#a9fbe8" strokeWidth="2.4" />
      <line x1="887" y1="406" x2="1017" y2="483" stroke="#d9eefc" strokeWidth="2.6" />
      <line x1="1017" y1="332" x2="1017" y2="483" stroke="#b9dcff" strokeWidth="2.6" />
      <polygon points="1008,483 1092,433 1203,433 1367,528 1227,609" fill="none" stroke="#0a2a48" strokeWidth="1.4" />
      <line x1="1017" y1="483" x2="1490" y2="756" stroke="#95a5b0" strokeWidth="3" />
      <g fill="none" stroke="#1a7a92" strokeWidth="0.8">
        <path d="M982 483l35-21 36 21-36 20z" />
        <path d="M1000 451v43l17 9M1036 451v43l-19 9M1000 451l17 10v42M1036 451l-19 10" />
      </g>
      <rect x="505" y="213" width="61" height="4" fill="#b0b0b0" />
      <rect x="566" y="217" width="60" height="5" fill="#b0b0b0" />
      <path d="M505 213h121M505 221v4M505 222h61M566 221v4M626 213v9" fill="none" stroke="#aaa" strokeWidth="1" />
      <g fill="#a5a5a5" fontFamily="Liberation Mono" fontSize="10">
        <text x="631" y="221">m</text>
        <text x="502" y="240">0</text>
        <text x="554" y="240">8.12</text>
        <text x="615" y="240">16.2</text>
      </g>
      <path d="M574 751v21l5-4 3 7 3-1-3-7 6 0z" fill="#fff" stroke="#222" strokeWidth="1" />
      <line x1="1818" y1="907" x2="1818" y2="884" stroke="#0d1c9c" strokeWidth="5" />
      <path d="M1818 877l-4 9h8z" fill="#0d1c9c" />
      <line x1="1818" y1="907" x2="1840" y2="896" stroke="#22d022" strokeWidth="4" />
      <path d="M1845 892l-11-1 5 9z" fill="#22d022" />
      <line x1="1818" y1="907" x2="1838" y2="918" stroke="#c81414" strokeWidth="4" />
      <path d="M1845 922l-5-10-5 8z" fill="#c81414" />
      <circle cx="1818" cy="907" r="3" fill="#c8a420" />
      <g fontFamily="Liberation Sans" fontSize="11">
        <text x="1819" y="870" fill="#14206a">Z</text>
        <text x="1851" y="889" fill="#40c040">Y</text>
        <text x="1851" y="926" fill="#b02020">X</text>
      </g>
    </svg>
  );
};

const Viewport = () => (
  <div className="relative h-[753px] shrink-0 bg-white border-t-2 border-l-2 border-r-2 border-t-[#6e7680] border-l-[#6e7680] border-r-[#d4d8dd] overflow-hidden">
    <Scene />
    <div className="absolute left-[380px] top-[12px] flex items-center text-[12px] text-[#2b2f34] bg-white/60">
      <VBtn n="v1" w="w-[28px]" active />
      <VBtn n="v2" w="w-[28px]" />
      <VSep w="w-[8px]" />
      <VBtn n="v3" w="w-[32px]" />
      <div className="w-[15px] flex justify-center"><div className="w-0 h-0 border-x-[3px] border-x-transparent border-t-[4px] border-t-[#6a7480]" /></div>
      <VSep w="w-[9px]" />
      <div className="w-[108px] pl-[9px] shrink-0 text-[14px]">基础</div>
      <Drop />
      <div className="w-[112px] pl-[11px] shrink-0 text-[14px]">实体 (D)</div>
      <Drop />
      <VSep w="w-[11px]" />
      <VBtn n="v4" w="w-[29px]" />
      <VBtn n="v5" w="w-[27px]" />
      <VBtn n="v6" w="w-[27px]" />
      <VSep w="w-[10px]" />
      <VBtn n="v7" w="w-[29px]" />
      <VBtn n="v8" w="w-[27px]" />
      <VSep w="w-[12px]" />
      <VBtn n="v9" w="w-[29px]" />
      <VBtn n="v10" w="w-[27px]" />
      <VSep w="w-[8px]" />
      <VBtn n="v11" w="w-[30px]" />
    </div>
    <div className="absolute left-[1312px] top-[537px] w-[48px] h-[48px] rounded-full border-[3px] border-[#def1fb] bg-gradient-to-br from-[#3e92ea] to-[#62a9f5] flex items-center justify-center text-[14px] text-white shadow-sm">00:15</div>
  </div>
);

const TabStrip = () => (
  <div className="h-[35px] shrink-0 flex items-start bg-gradient-to-b from-[#dde1e7] to-[#e6e9ee] border-b border-[#f4f5f7]">
    <div className="w-[18px] h-[34px] ml-[1px] flex items-center justify-center">
      <svg width="8" height="12" viewBox="0 0 8 12"><path d="M6 1L1 6l5 5z" fill="none" stroke="#8a929c" /></svg>
    </div>
    <svg width="210" height="30" viewBox="0 0 210 30" className="shrink-0 -ml-[1px]">
      <path d="M1 0l25 28h183" fill="#f3f4f6" stroke="#6a7280" strokeWidth="1" />
    </svg>
    <div className="flex items-center h-[32px] -ml-[180px] pl-[4px] shrink-0">
      <svg width="20" height="22" viewBox="0 0 20 22" className="shrink-0">
        <path d="M3 1h14v14l-4 5H3z" fill="#eef2f7" stroke="#6a7a90" />
        <rect x="5" y="4" width="10" height="5" fill="#c83a3a" />
        <path d="M5 12h9M5 15h6" stroke="#6a7a90" />
      </svg>
      <span className="ml-[8px] text-[14px] font-bold text-[#14181d] tracking-[0.1px]">Model-Start file</span>
      <svg width="11" height="11" viewBox="0 0 11 11" className="ml-[11px]"><path d="M1 1l9 9M10 1l-9 9" stroke="#3f4852" strokeWidth="1.2" /></svg>
    </div>
    <div className="flex-1" />
    <div className="w-[22px] h-[34px] flex items-center justify-center">
      <svg width="8" height="12" viewBox="0 0 8 12"><path d="M2 1l5 5-5 5z" fill="none" stroke="#8a929c" /></svg>
    </div>
  </div>
);

const Output = () => (
  <div className="flex-1 min-h-0 flex overflow-hidden bg-gradient-to-b from-[#bcc3cc] to-[#d0d5da] text-[12px] leading-[18px] text-[#3e4651] pl-[1px] pr-[9px] pt-[4px]">
    <span className="flex-1">输出</span>
    <svg width="10" height="12" viewBox="0 0 12 14" className="mr-[11px]"><path d="M3 1h6M4 1v6h4V1M1 8h10M6 8v6" fill="none" stroke="#5a6470" strokeWidth="1.2" /></svg>
    <svg width="10" height="10" viewBox="0 0 12 12"><path d="M1 1l10 10M11 1L1 11" stroke="#4a5460" strokeWidth="1.4" /></svg>
  </div>
);

const Side = () => (
  <div className="w-[23px] h-[115px] shrink-0 bg-gradient-to-r from-[#fff0c0] to-[#f8cf78] border-b border-[#c8c0a0] flex flex-col items-center pt-[4px]">
    <div className="w-[16px] h-[14px] rounded-full bg-gradient-to-b from-[#cfeccf] to-[#58b060] border border-[#a9c8a9]" />
    <div className="mt-[6px] text-[14px] leading-[15px] tracking-[1.5px] text-[#7a7a70] [writing-mode:vertical-rl]">任务窗口</div>
  </div>
);

const Status = () => (
  <div className="h-[21px] shrink-0 flex items-stretch overflow-hidden bg-gradient-to-b from-[#e6e8eb] to-[#a9afb6] text-[13px] leading-[23px] text-[#2b2f34] font-['Liberation_Mono','Noto_Sans_CJK_SC',monospace] whitespace-nowrap tracking-[0.1px]">
    <div className="w-[916px] shrink-0" />
    <div className="w-[207px] pl-[4px] border-l border-[#8f959c] shrink-0">W: -84.9729, -86.7605</div>
    <div className="w-[337px] pl-[4px] border-l border-[#8f959c] shrink-0 tracking-[-0.45px]">X: -25~65 Y: -25~50 Z:-25~0.00125</div>
    <div className="w-[237px] pl-[2px] border-l border-[#8f959c] shrink-0">G:[228] N:[0] E:[0]</div>
    {['kN', 'm', 'sec'].map((u, i) => (
      <div key={u} className={`${i === 0 ? 'w-[49px] mr-[3px]' : i === 1 ? 'w-[48px] mr-[3px]' : 'w-[48px]'} mt-[2px] pl-[3px] border border-[#a6acb3] bg-[#dcdfe3] flex justify-between items-center pr-[5px] shrink-0 overflow-hidden`}>
        <span className="w-[24px]">{u}</span>
        <svg width="8" height="5" viewBox="0 0 8 5" className="shrink-0"><path d="M1 1l3 3 3-3" fill="none" stroke="#444" /></svg>
      </div>
    ))}
    <div className="flex-1" />
    <div className="w-[1px] bg-[#8f959c] mr-[19px]" />
  </div>
);

const Task = ({ w, line, children }: { w: string; line?: boolean; children: React.ReactNode }) => (
  <div className={`${w} h-[50px] shrink-0 relative flex items-center justify-center`}>
    {children}
    {line ? <div className="absolute left-[5px] right-[5px] bottom-0 h-[3px] bg-[#79b0e2]" /> : null}
  </div>
);

const Taskbar = () => (
  <div className="h-[50px] shrink-0 flex items-stretch text-white bg-[linear-gradient(90deg,#3c3d3d_0%,#3a3b3a_26%,#4a3d30_36%,#3e342c_46%,#2f2522_54%,#302422_60%,#3a3d3d_72%,#3a3d3e_100%)]">
    <div className="w-[60px] shrink-0 flex items-center justify-center">
      <svg width="21" height="21" viewBox="0 0 21 21"><path d="M0 3l9-1.3V10H0zM10 1.5L21 0v10H10zM0 11h9v8.3L0 18zM10 11h11v10l-11-1.6z" fill="#fff" /></svg>
    </div>
    <div className="w-[430px] shrink-0 bg-[#f0f0f0] flex items-center pl-[15px] text-[19px] text-[#3a3a3a]">
      <svg width="22" height="24" viewBox="0 0 22 24" className="shrink-0"><circle cx="13" cy="9" r="7" fill="none" stroke="#222" strokeWidth="1.6" /><path d="M8 14L1 22" stroke="#222" strokeWidth="1.6" /></svg>
      <span className="ml-[13px] tracking-[-0.2px]">在这里输入你要搜索的内容</span>
    </div>
    <Task w="w-[60px]">
      <div className="w-[20px] h-[20px] rounded-full border-[3px] border-white" />
    </Task>
    <Task w="w-[60px]">
      <svg width="22" height="20" viewBox="0 0 22 20"><path d="M1 1h14M1 19h14M1 6h14v8H1zM20 1v5M20 10v9" fill="none" stroke="#fff" strokeWidth="1.5" /><rect x="18" y="7" width="3" height="3" fill="#fff" /></svg>
    </Task>
    <Task w="w-[63px]">
      <svg width="28" height="28" viewBox="0 0 28 28"><g fill="#eeeeee"><path d="M13 13.500C7 14 1 11 1 6c0-4 3-5.500 7-5.500 6 0 8 7 5 13z" /><path d="M14.500 13C14 7 17 1 22 1c4 0 5.500 3 5.500 7 0 6-7 8-13 5z" /><path d="M15 14.500c6-.5 12 2.500 12 7.500 0 4-3 5.500-7 5.500-6 0-8-7-5-13z" /><path d="M13.500 15c.5 6-2.500 12-7.500 12-4 0-5.500-3-5.500-7 0-6 7-8 13-5z" /></g></svg>
    </Task>
    <Task w="w-[68px]">
      <svg width="30" height="30" viewBox="0 0 30 30">
        <circle cx="15" cy="15" r="12.5" fill="#7cc83a" />
        <path d="M7 15h15c0-9-14-10-15 0s12 9 14 4" fill="none" stroke="#fff" strokeWidth="3" />
        <path d="M3 25C2 20 18 3 28 3" fill="none" stroke="#9fe060" strokeWidth="1.4" />
      </svg>
    </Task>
    <Task w="w-[61px]" line>
      <svg width="30" height="26" viewBox="0 0 30 26">
        <path d="M1 4a2 2 0 0 1 2-2h8l3 3h13a2 2 0 0 1 2 2v17H1z" fill="#e8a820" />
        <rect x="1" y="8" width="28" height="16" rx="1" fill="#fbd35a" />
        <path d="M8 24v-8h14v8h-4v-4h-6v4z" fill="#2f8fd8" />
      </svg>
    </Task>
    <Task w="w-[62px]" line>
      <svg width="29" height="29" viewBox="0 0 29 29">
        <rect width="29" height="29" rx="2" fill="#f5f3f0" />
        <path d="M2 13L12 3l3 3-7 7 5 5-3 3z" fill="#c8381e" />
        <path d="M13 3h8l5 6-4 3-4-5h-3z" fill="#1d8aa0" />
        <path d="M12 13l5-3 4 4-5 4z" fill="#e8a020" />
        <text x="14" y="27" fontSize="11" fontWeight="700" fill="#c8381e" fontFamily="Liberation Sans">NX</text>
      </svg>
    </Task>
    <div className="flex-1" />
    <div className="flex items-center w-[339px] shrink-0 pl-[10px]">
      <svg width="16" height="10" viewBox="0 0 16 10" className="mr-[14px]"><path d="M1 9l7-8 7 8" fill="none" stroke="#fff" strokeWidth="1.2" /></svg>
      <svg width="13" height="22" viewBox="0 0 13 22" className="mr-[14px]"><rect x="3" y="0" width="7" height="14" rx="3.5" fill="#e8e8e8" /><path d="M1 10c0 7 11 7 11 0M6.5 15v6M3 21h7" fill="none" stroke="#e8e8e8" /></svg>
      <svg width="20" height="14" viewBox="0 0 20 14" className="mr-[10px]"><rect x="1" y="3" width="17" height="10" fill="#d8d8d8" stroke="#eee" /><rect x="3" y="0" width="4" height="4" fill="#eee" /></svg>
      <svg width="20" height="20" viewBox="0 0 20 20" className="mr-[7px]"><path d="M3 1h14v12H3zM10 13v6M5 19h10" fill="none" stroke="#eee" strokeWidth="1.1" /></svg>
      <svg width="20" height="16" viewBox="0 0 20 16" className="mr-[11px]"><path d="M1 5h3l4-4v14l-4-4H1z" fill="none" stroke="#eee" /><path d="M11 4q3 4 0 8M14 2q5 6 0 12" fill="none" stroke="#aaa" /></svg>
      <span className="text-[18px] font-['Noto_Sans_CJK_SC',sans-serif] mr-[2px]">英</span>
      <div className="w-[80px] shrink-0 text-center text-[15px] tracking-[0.7px] leading-[22px] text-[#f4f4f4]">
        <div>16:57</div>
        <div>2020/1/19</div>
      </div>
      <svg width="22" height="22" viewBox="0 0 22 22" className="ml-[32px] shrink-0"><path d="M2 2h18v15h-6l-3 3-3-3H2z" fill="none" stroke="#eee" strokeWidth="1.2" /></svg>
    </div>
  </div>
);

const QatDrop = () => (
  <div className="flex flex-col items-center">
    <div className="w-[7px] h-[1px] bg-[#3e4651] mb-[1px]" />
    <div className="w-0 h-0 border-x-[4px] border-x-transparent border-t-[5px] border-t-[#3e4651]" />
  </div>
);

const QI: Record<string, React.ReactNode> = {
  nw: <><path d="M5 1h10l5 5v17H5z" fill="#fff" stroke="#4a5668" strokeWidth="1.5" /><path d="M15 1v5h5" fill="#dde3ea" stroke="#4a5668" strokeWidth="1.2" /></>,
  op: <><path d="M2 6h7l2 2h8v3H7l-5 11z" fill="#e8b040" stroke="#8a6a20" /><path d="M7 11h16l-5 11H2z" fill="#f6cf6a" stroke="#8a6a20" /></>,
  sv: <><rect x="3" y="2" width="18" height="20" rx="2" fill="#5d7ba6" stroke="#3f4f66" /><rect x="7" y="2" width="10" height="7" fill="#e8eef6" /><rect x="7" y="14" width="10" height="8" fill="#fff" /></>,
  f1: <><rect x="3" y="7" width="17" height="15" rx="1" fill="#f0c23c" stroke="#6a5218" /><path d="M3 7l3-3h5l2 3" fill="#d8a82a" stroke="#6a5218" /><path d="M20 1l3 3" stroke="#5a6470" /></>,
  f2: <><rect x="5" y="5" width="16" height="14" fill="#c99a2c" stroke="#6a5218" /><rect x="2" y="8" width="17" height="15" rx="1" fill="#f0c23c" stroke="#6a5218" /></>,
  un: <><path d="M12 4L3 11l9 7v-4c5 0 8 1 9 5 0-7-3-11-9-11z" fill="#97a3b3" /></>,
  li: <><path d="M7 8h4M7 12h8M7 16h10" stroke="#aab2bc" strokeWidth="1.4" /></>,
  rd: <><path d="M12 4l9 7-9 7v-4c-5 0-8 1-9 5 0-7 3-11 9-11z" fill="#97a3b3" /></>,
};

const Qbtn = ({ n, cls }: { n: string; cls: string }) => (
  <svg width="24" height="24" viewBox="0 0 24 24" className={`shrink-0 ${cls}`}>{QI[n]}</svg>
);

const Logo = () => (
  <div className="absolute left-[5px] top-[5px] w-[46px] h-[46px] rounded-full border border-[#9aa2ac] bg-gradient-to-b from-[#f2f3f5] to-[#b5bac1] flex items-center justify-center shadow-[0_1px_3px_#555]">
    <svg width="36" height="36" viewBox="0 0 36 36">
      <path d="M3 18L15 6l4 4-9 8 6 6-4 4z" fill="#c8381e" />
      <path d="M16 5h10l7 8-5 4-5-7h-4z" fill="#1d8aa0" />
      <path d="M16 17l6-4 5 5-6 5z" fill="#e8a020" />
      <text x="17" y="33" fontSize="12" fontWeight="700" fill="#c8381e" fontFamily="Liberation Sans">NX</text>
    </svg>
  </div>
);

const tabs: [string, string][] = [
  ['几何', 'w-[46px]'],
  ['网格', 'w-[54px]'],
  ['静力/边坡分析', 'w-[107px]'],
  ['渗流/固结分析', 'w-[108px]'],
  ['动力分析', 'w-[78px]'],
  ['分析', 'w-[53px]'],
  ['结果', 'w-[50px]'],
  ['工具', 'w-[52px]'],
];

const MiniDrop = () => <span className="ml-[10px] mr-[5px] mb-[5px] w-0 h-0 border-x-[4px] border-x-transparent border-t-[5px] border-t-[#5a6470]" />;

export default function App() {
  return (
    <div className="relative w-[1920px] h-[1080px] overflow-hidden flex flex-col bg-[#cdd3dc] font-['Noto_Sans','Noto_Sans_CJK_SC',sans-serif]">
      <div className="h-[29px] shrink-0 flex items-center border-b border-[#a9b0b8] bg-gradient-to-b from-[#e4e7eb] to-[#f6f7f8]">
        <div className="w-[55px] shrink-0" />
        <div className="w-[248px] h-[22px] shrink-0 flex items-center pl-[6px] rounded-r-full rounded-l-[8px] border-b border-r border-[#c3c8cf] bg-gradient-to-b from-[#e4e7ea] to-[#eef0f2]">
          <Qbtn n="nw" cls="ml-[0px]" />
          <Qbtn n="op" cls="ml-[1px]" />
          <Qbtn n="sv" cls="ml-[3px]" />
          <Qbtn n="f1" cls="ml-[3px]" />
          <Qbtn n="f2" cls="ml-[1px]" />
          <Qbtn n="un" cls="ml-[1px]" />
          <Qbtn n="li" cls="ml-[3px]" />
          <Qbtn n="rd" cls="ml-[1px]" />
          <Qbtn n="li" cls="ml-[3px]" />
        </div>
        <div className="w-[16px] shrink-0 flex justify-end"><QatDrop /></div>
        <div className="flex-1 pl-[4px] text-center text-[16px] leading-[28px] pt-[1px] text-[#7c828a]">GTS NX - [Model-Start file]</div>
        <div className="w-[131px] shrink-0 flex items-center text-[#8f969f]">
          <div className="w-[15px]" />
          <div className="w-[10px] h-[2px] mt-[4px] bg-[#8f969f]" />
          <div className="w-[31px]" />
          <div className="w-[11px] h-[9px] border border-[#8f969f]" />
          <div className="w-[40px]" />
          <svg width="12" height="12" viewBox="0 0 12 12"><path d="M1 1l10 10M11 1L1 11" stroke="#8f969f" strokeWidth="2.4" /></svg>
        </div>
      </div>
      <div className="h-[30px] shrink-0 flex items-end pl-[60px]">
        {tabs.map(([t, w], i) => (
          <div key={t} className={`${w} h-[27px] shrink-0 text-center text-[12px] leading-[28px] text-[#3e4651] ${i === 0 ? 'rounded-t-[3px] bg-gradient-to-b from-[#f4f6f8] to-[#e2e6ea]' : ''}`}>{t}</div>
        ))}
        <div className="flex-1" />
        <div className="h-[27px] flex items-center text-[12px] text-[#3e4651] pr-[6px]">
          <span>样式</span>
          <MiniDrop />
          <span>背景</span>
          <MiniDrop />
          <span>语言</span>
          <MiniDrop />
          <div className="ml-[2px] w-[17px] h-[17px] rounded-full bg-[#2a60c8] border-2 border-[#c3d8f5] text-white text-[11px] font-bold leading-[13px] text-center">?</div>
          <div className="ml-[14px] w-[7px] h-[2px] bg-[#5a6470]" />
          <div className="ml-[17px] w-[8px] h-[8px] border border-[#5a6470] border-t-2" />
          <svg className="ml-[15px]" width="9" height="9" viewBox="0 0 12 12"><path d="M1 1l10 10M11 1L1 11" stroke="#5a6470" strokeWidth="2.4" /></svg>
        </div>
      </div>
      <Ribbon />
      <Toolbar />
      <div className="flex-1 min-h-0 flex">
        <LeftPanel />
        <div className="w-[8px] shrink-0" />
        <div className="w-[1408px] shrink-0 flex flex-col pt-[3px]">
          <Viewport />
          <TabStrip />
          <Output />
        </div>
        <div className="flex-1 flex flex-col gap-[15px] pt-[3px] pl-[5px]">
          <Side />
          <Side />
        </div>
      </div>
      <Status />
      <Taskbar />
      <Logo />
    </div>
  );
}
